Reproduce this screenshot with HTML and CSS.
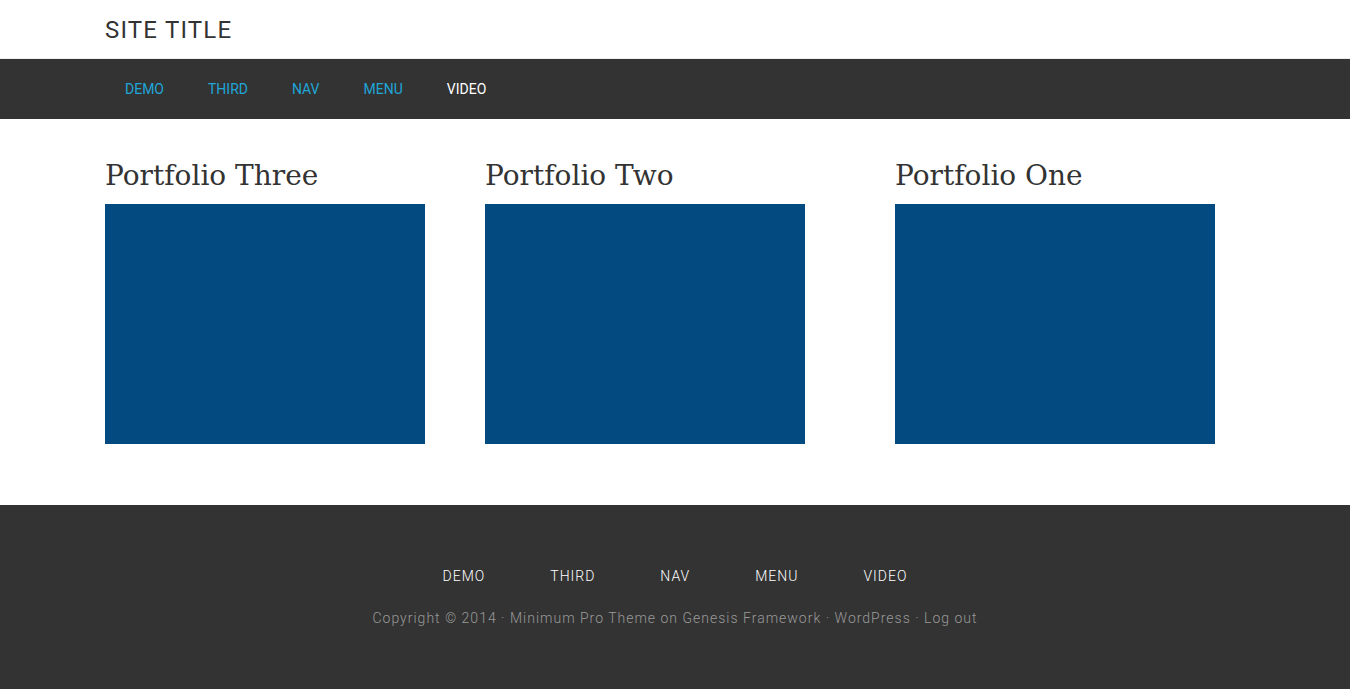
FILE: index.html
```html
<!DOCTYPE html>
<html lang="en">
<head>
  <meta charset="UTF-8">
  <title>Site Title</title>
  <link rel="stylesheet" href="styles.css">
</head>
<body>

  <!-- Header -->
  <header class="site-header">
    <div class="wrap">
      <a class="site-title" href="#">SITE TITLE</a>
    </div>
  </header>

  <!-- Primary Nav -->
  <nav class="nav-primary">
    <ul class="wrap menu">
      <li><a href="#">DEMO</a></li>
      <li><a href="#">THIRD</a></li>
      <li><a href="#">NAV</a></li>
      <li><a href="#">MENU</a></li>
      <li class="current"><a href="#">VIDEO</a></li>
    </ul>
  </nav>

  <!-- Portfolio -->
  <main class="content">
    <div class="wrap portfolio">
      <article class="entry">
        <h2 class="entry-title">Portfolio Three</h2>
        <div class="entry-image"></div>
      </article>
      <article class="entry">
        <h2 class="entry-title">Portfolio Two</h2>
        <div class="entry-image"></div>
      </article>
      <article class="entry">
        <h2 class="entry-title">Portfolio One</h2>
        <div class="entry-image"></div>
      </article>
    </div>
  </main>

  <!-- Footer -->
  <footer class="site-footer">
    <ul class="footer-menu">
      <li><a href="#">DEMO</a></li>
      <li><a href="#">THIRD</a></li>
      <li><a href="#">NAV</a></li>
      <li><a href="#">MENU</a></li>
      <li><a href="#">VIDEO</a></li>
    </ul>
    <p class="copyright">Copyright &copy; 2014 &middot; <a href="#">Minimum Pro Theme</a> on <a href="#">Genesis Framework</a> &middot; <a href="#">WordPress</a> &middot; <a href="#">Log out</a></p>
  </footer>

</body>
</html>
```

FILE: styles.css
```css
body {
  margin: 0;
  font-family: Roboto, "Liberation Sans", sans-serif;
  color: #333;
  background-color: #fff;
}

a {
  text-decoration: none;
  color: inherit;
}

ul {
  list-style: none;
  margin: 0;
  padding: 0;
}

.wrap {
  width: 1140px;
  margin: 0 auto;
}

/* Header */
.site-header {
  height: 58px;
  border-bottom: 1px solid #eee;
}

.site-header .wrap {
  display: flex;
  align-items: center;
  height: 100%;
}

.site-title {
  font-size: 24px;
  letter-spacing: 1.2px;
  color: #333;
  padding-top: 1px;
}

/* Primary Nav */
.nav-primary {
  background-color: #333;
  height: 60px;
}

.menu {
  display: flex;
  align-items: center;
  gap: 4px;
  height: 100%;
}

.menu a {
  display: block;
  padding: 0 20px;
  font-size: 14px;
  color: #1fa6d8;
}

.menu .current a {
  color: #fff;
}

/* Portfolio */
.content {
  padding: 39px 0 61px;
}

.portfolio {
  display: grid;
  grid-template-columns: 380px 410px 320px;
}

.entry-title {
  margin: 0 0 10px;
  font-family: "DejaVu Serif", "Liberation Serif", serif;
  font-size: 28px;
  font-weight: normal;
  line-height: 36px;
  color: #333;
}

.entry-image {
  width: 320px;
  height: 240px;
  background-color: #024a7f;
}

/* Footer */
.site-footer {
  background-color: #333;
  height: 184px;
  padding-top: 61px;
  box-sizing: border-box;
  text-align: center;
  letter-spacing: 1px;
  font-size: 14px;
  font-weight: 300;
}

.footer-menu {
  display: flex;
  justify-content: center;
  gap: 5px;
}

.footer-menu a {
  display: block;
  padding: 0 30px;
  color: #fff;
  line-height: 20px;
}

.copyright {
  margin: 22px 0 0;
  color: #999;
  line-height: 20px;
}
```
